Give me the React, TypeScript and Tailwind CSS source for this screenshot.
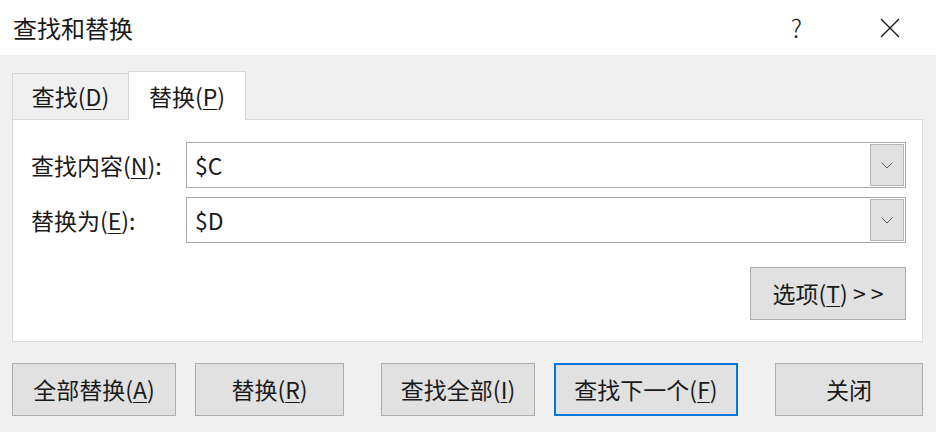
import React from "react";

const font = { fontFamily: '"Noto Sans CJK SC", "Noto Sans", sans-serif' };

function Key({ k }: { k: string }) {
  return <span className="underline decoration-1 underline-offset-[3px]">{k}</span>;
}

function Combo({ value }: { value: string }) {
  return (
    <div className="flex h-[46px] flex-1 items-center border border-[#a9a9a9] bg-white">
      <span className="flex-1 pl-2 text-[23px] text-[#1a1a1a]">{value}</span>
      <div className="mr-[1px] flex h-[42px] w-[34px] items-center justify-center border border-[#b4b4b4] bg-[#e1e1e1]">
        <svg width="12" height="7" viewBox="0 0 12 7" fill="none" stroke="#5a5a5a" strokeWidth="1">
          <path d="M0.5 0.5 L6 6 L11.5 0.5" />
        </svg>
      </div>
    </div>
  );
}

function Btn({ w, ml, focus, children }: { w: string; ml: string; focus?: boolean; children: React.ReactNode }) {
  return (
    <button
      className={`${w} ${ml} flex h-[53px] items-center justify-center bg-[#e1e1e1] text-[23px] text-[#1a1a1a] ${
        focus ? "border-2 border-[#0078d7]" : "border border-[#adadad]"
      }`}
    >
      {children}
    </button>
  );
}

export default function App() {
  return (
    <div className="flex h-[432px] w-[936px] flex-col bg-[#f0f0f0] text-[#1a1a1a]" style={font}>
      <div className="flex h-[55px] items-center bg-white pl-[13px]">
        <span className="flex-1 text-[24px]">查找和替换</span>
        <span className="mr-[78px] text-[25px] font-light">?</span>
        <svg className="mr-[36px]" width="20" height="20" viewBox="0 0 20 20" stroke="#1a1a1a" strokeWidth="1.4">
          <path d="M1 1 L19 19 M19 1 L1 19" />
        </svg>
      </div>

      <div className="flex flex-col px-3">
        <div className="mt-4 flex h-[48px] items-end">
          <div className="flex h-[46px] w-[116px] items-center justify-center border-l border-t border-[#d9d9d9] text-[23px]">
            查找(<Key k="D" />)
          </div>
          <div className="relative -mb-px flex h-[49px] w-[118px] items-center justify-center border-x border-t border-[#d9d9d9] bg-white text-[23px]">
            替换(<Key k="P" />)
          </div>
        </div>

        <div className="flex h-[223px] w-[911px] flex-col border border-[#d9d9d9] bg-white pl-[18px] pr-4 pt-[22px]">
          <div className="flex items-center">
            <span className="w-[155px] text-[23px]">
              查找内容(<Key k="N" />):
            </span>
            <Combo value="$C" />
          </div>
          <div className="mt-[9px] flex items-center">
            <span className="w-[155px] text-[23px]">
              替换为(<Key k="E" />):
            </span>
            <Combo value="$D" />
          </div>
          <div className="mt-6 flex justify-end">
            <button className="flex h-[53px] w-[156px] items-center justify-center border border-[#adadad] bg-[#e1e1e1] text-[23px]">
              选项(<Key k="T" />)&nbsp;&gt;&nbsp;&gt;
            </button>
          </div>
        </div>

        <div className="mt-[21px] flex">
          <Btn w="w-[164px]" ml="ml-0">
            全部替换(<Key k="A" />)
          </Btn>
          <Btn w="w-[149px]" ml="ml-[19px]">
            替换(<Key k="R" />)
          </Btn>
          <Btn w="w-[154px]" ml="ml-[37px]">
            查找全部(<Key k="I" />)
          </Btn>
          <Btn w="w-[184px]" ml="ml-[19px]" focus>
            查找下一个(<Key k="F" />)
          </Btn>
          <Btn w="w-[148px]" ml="ml-[37px]">
            关闭
          </Btn>
        </div>
      </div>
    </div>
  );
}
